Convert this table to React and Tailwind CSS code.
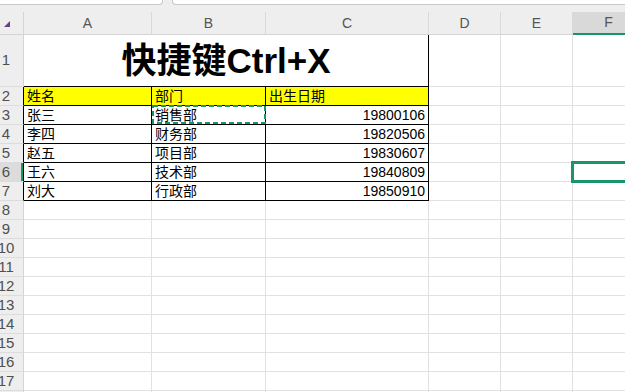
const GREEN = '#16966a'

const people = [
  ['张三', '销售部', '19800106'],
  ['李四', '财务部', '19820506'],
  ['赵五', '项目部', '19830607'],
  ['王六', '技术部', '19840809'],
  ['刘大', '行政部', '19850910'],
]

const letters = ['A', 'B', 'C', 'D', 'E', 'F']
const colW = ['w-[128px]', 'w-[114px]', 'w-[163px]', 'w-[72px]', 'w-[72px]', 'w-[72px]']

function RowHead({ n, tall, dark, active }) {
  return (
    <div
      className={
        'relative flex shrink-0 w-[24px] items-center justify-center pr-[11px] border-b border-b-[#dcdcdc] border-r text-[15px] text-[#505050] ' +
        (tall ? 'h-[52px] ' : 'h-[19px] ') +
        (dark ? 'border-r-black ' : 'border-r-[#d4d4d4] ') +
        (active ? 'bg-[#dcdcdc]' : 'bg-[#eeeeee]')
      }
    >
      {n}
      {active && <div className="absolute right-0 top-0 h-full w-[2px] bg-[#16966a]" />}
    </div>
  )
}

function EmptyCells({ from, tall }) {
  return colW.slice(from).map((w, i) => (
    <div
      key={i}
      className={'shrink-0 border-r border-b border-[#e1e1e1] ' + w + (tall ? ' h-[52px]' : ' h-[19px]')}
    />
  ))
}

function Cell({ w, yellow, right, children }) {
  return (
    <div
      className={
        'flex shrink-0 h-[19px] items-end border-r border-b border-black px-[3px] text-[14px] leading-[18px] text-black ' +
        w +
        (yellow ? ' bg-[#ffff00]' : ' bg-white') +
        (right ? ' justify-end' : '')
      }
    >
      {children}
    </div>
  )
}

export default function App() {
  return (
    <div
      className="relative h-[392px] w-[625px] overflow-hidden bg-white"
      style={{ fontFamily: '"Liberation Sans", "Noto Sans CJK SC", sans-serif' }}
    >
      {/* tab strip */}
      <div className="flex h-[12px] bg-[#eeeeee]">
        <div className="h-[5px] w-[163px] shrink-0 rounded-br-[4px] border-r border-b border-[#c8c8c8] bg-white" />
        <div className="w-[9px] shrink-0" />
        <div className="h-[5px] flex-1 rounded-bl-[4px] border-l border-b border-[#c8c8c8] bg-white" />
      </div>

      {/* column headers */}
      <div className="flex h-[23px]">
        <div className="w-[24px] shrink-0 border-r border-b border-[#d4d4d4] bg-[#eeeeee]">
          <svg width="7" height="7" viewBox="0 0 7 7" className="ml-[4px] mt-[9px]">
            <polygon points="6,0 6,6 0,6" fill="#6b3f86" />
          </svg>
        </div>
        {letters.map((l, i) => (
          <div
            key={l}
            className={
              'flex shrink-0 items-center justify-center border-r border-r-[#d9d9d9] text-[14px] text-[#555] ' +
              colW[i] +
              (l === 'F' ? ' border-b-2 border-b-[#16966a] bg-[#d9d9d9]' : ' border-b border-b-[#d4d4d4] bg-[#eeeeee]')
            }
          >
            {l}
          </div>
        ))}
      </div>

      {/* row 1: merged title */}
      <div className="flex">
        <RowHead n={1} tall />
        <div className="flex h-[52px] w-[405px] shrink-0 items-center justify-center border-r border-b border-black pt-[1px] text-[35px] font-bold text-black">
          快捷键Ctrl+X
        </div>
        <EmptyCells from={3} tall />
      </div>

      {/* row 2: header */}
      <div className="flex">
        <RowHead n={2} dark />
        <Cell w="w-[128px]" yellow>姓名</Cell>
        <Cell w="w-[114px]" yellow>部门</Cell>
        <Cell w="w-[163px]" yellow>出生日期</Cell>
        <EmptyCells from={3} />
      </div>

      {people.map((p, i) => (
        <div key={p[0]} className="flex">
          <RowHead n={i + 3} dark active={i === 3} />
          <Cell w="w-[128px]">{p[0]}</Cell>
          <Cell w="w-[114px]">{p[1]}</Cell>
          <Cell w="w-[163px]" right>{p[2]}</Cell>
          <EmptyCells from={3} />
        </div>
      ))}

      {[8, 9, 10, 11, 12, 13, 14, 15, 16, 17, 18].map((n) => (
        <div key={n} className="flex">
          <RowHead n={n} />
          <EmptyCells from={0} />
        </div>
      ))}

      {/* copy marquee on B3 */}
      <svg width="114" height="19" className="absolute left-[152px] top-[105px]">
        <rect x="1" y="1" width="112" height="17" fill="none" stroke={GREEN} strokeWidth="2" strokeDasharray="5 3" />
      </svg>

      {/* active cell F6 */}
      <div className="absolute left-[571px] top-[161px] h-[22px] w-[80px] border-[3px] border-[#16966a]" />
    </div>
  )
}
